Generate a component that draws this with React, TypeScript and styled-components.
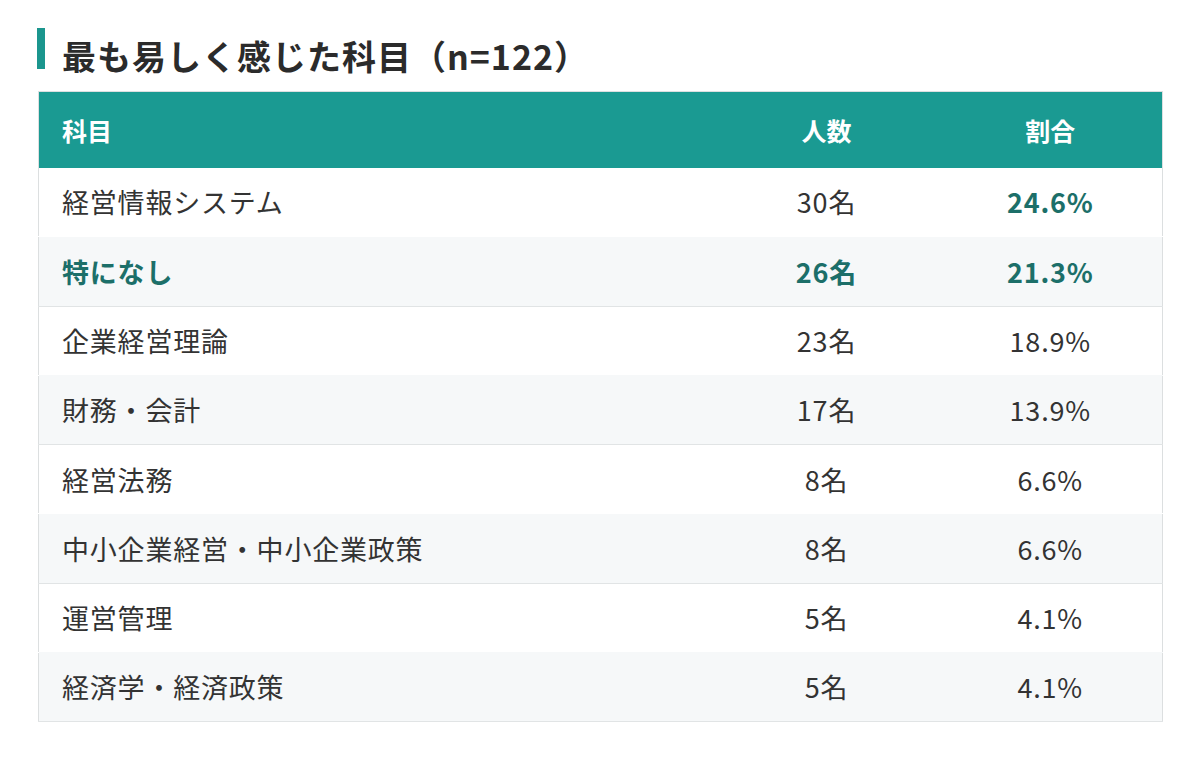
import styled, { createGlobalStyle } from "styled-components";

const GlobalStyle = createGlobalStyle`
  html, body {
    margin: 0;
    padding: 0;
    background: #ffffff;
  }
  body {
    font-family: "Noto Sans CJK JP", "Noto Sans", sans-serif;
    color: #333333;
  }
`;

type Row = {
  subject: string;
  count: string;
  rate: string;
  highlight?: boolean;
  rateBold?: boolean;
};

const rows: Row[] = [
  { subject: "経営情報システム", count: "30名", rate: "24.6%", rateBold: true },
  { subject: "特になし", count: "26名", rate: "21.3%", highlight: true, rateBold: true },
  { subject: "企業経営理論", count: "23名", rate: "18.9%" },
  { subject: "財務・会計", count: "17名", rate: "13.9%" },
  { subject: "経営法務", count: "8名", rate: "6.6%" },
  { subject: "中小企業経営・中小企業政策", count: "8名", rate: "6.6%" },
  { subject: "運営管理", count: "5名", rate: "4.1%" },
  { subject: "経済学・経済政策", count: "5名", rate: "4.1%" },
];

export default function App() {
  return (
    <>
      <GlobalStyle />
      <Page>
        <TitleRow>
          <TitleBar />
          <Title>最も易しく感じた科目（n=122）</Title>
        </TitleRow>
        <Table>
          <colgroup>
            <col style={{ width: 676 }} />
            <col style={{ width: 224 }} />
            <col style={{ width: 224 }} />
          </colgroup>
          <thead>
            <HeadRow>
              <HeadCell $align="left">科目</HeadCell>
              <HeadCell $align="center">人数</HeadCell>
              <HeadCell $align="center">割合</HeadCell>
            </HeadRow>
          </thead>
          <tbody>
            {rows.map((r, i) => (
              <BodyRow key={r.subject} $striped={i % 2 === 1}>
                <Cell $align="left" $strong={r.highlight}>
                  {r.subject}
                </Cell>
                <Cell $align="center" $strong={r.highlight}>
                  {r.count}
                </Cell>
                <Cell $align="center" $strong={r.rateBold}>
                  {r.rate}
                </Cell>
              </BodyRow>
            ))}
          </tbody>
        </Table>
      </Page>
    </>
  );
}

const Page = styled.div`
  padding: 26px 38px 0 38px;
  width: 1124px;
`;

const TitleRow = styled.div`
  display: flex;
  align-items: flex-start;
  gap: 17px;
  height: 55px;
  margin: 0 0 10px -1px;
`;

const TitleBar = styled.div`
  width: 8px;
  height: 41px;
  margin-top: 2px;
  background: #1b968e;
  flex-shrink: 0;
`;

const Title = styled.h2`
  margin: 7px 0 0 0;
  font-size: 34px;
  font-weight: 700;
  line-height: 46px;
  color: #2b2b2b;
  letter-spacing: 1px;
`;

const Table = styled.table`
  width: 100%;
  border-collapse: collapse;
  border: 1px solid #dcdfe0;
  table-layout: fixed;
`;

const HeadRow = styled.tr`
  background: #1a9a92;
  height: 76px;
`;

const HeadCell = styled.th<{ $align: "left" | "center" }>`
  color: #ffffff;
  font-size: 25px;
  font-weight: 700;
  text-align: ${(p) => p.$align};
  padding: 0;
  padding-left: ${(p) => (p.$align === "left" ? "23px" : "0")};
`;

const BodyRow = styled.tr<{ $striped: boolean }>`
  height: 69.25px;
  background: ${(p) => (p.$striped ? "#f6f8f9" : "#ffffff")};
  border-bottom: 1px solid ${(p) => (p.$striped ? "#e1e4e5" : "transparent")};
`;

const Cell = styled.td<{ $align: "left" | "center"; $strong?: boolean }>`
  font-size: 27px;
  letter-spacing: 0.8px;
  text-align: ${(p) => p.$align};
  padding: 0;
  padding-left: ${(p) => (p.$align === "left" ? "23px" : "0")};
  font-weight: ${(p) => (p.$strong ? 700 : 400)};
  color: ${(p) => (p.$strong ? "#1c6f69" : "#333333")};
`;
